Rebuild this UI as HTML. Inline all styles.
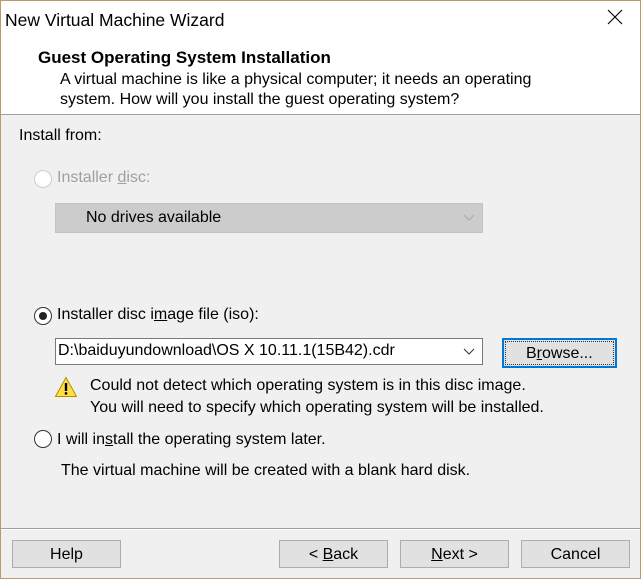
<!DOCTYPE html>
<html><head><style>
body{margin:0;width:641px;height:579px;overflow:hidden;font-family:"Liberation Sans",sans-serif;font-size:16px;color:#000;}
.win{position:absolute;left:0;top:0;width:639px;height:577px;border:1px solid #c0976a;background:#f0f0f0;}
.a{position:absolute;white-space:nowrap;}
.hdr{position:absolute;left:0;top:0;width:639px;height:113px;background:#fff;border-bottom:1px solid #a0a0a0;}
.radio{position:absolute;width:18px;height:18px;border-radius:50%;border:1px solid #333;background:#fff;box-sizing:border-box;}
.btn{position:absolute;top:539px;height:28px;width:109px;background:#e1e1e1;border:1px solid #adadad;box-sizing:border-box;text-align:center;line-height:28px;font-size:16px;}
u{text-decoration:underline;}
</style></head><body><div class="win">
<div class="hdr"></div>
<div class="a" style="left:4px;top:9px;font-size:17.5px;">New Virtual Machine Wizard</div>
<svg class="a" style="left:606px;top:8px" width="16" height="16"><path d="M1 1L15 15M15 1L1 15" stroke="#000" stroke-width="1.1"/></svg>
<div class="a" style="left:37px;top:47px;font-weight:bold;font-size:17px;">Guest Operating System Installation</div>
<div class="a" style="left:59px;top:70px;">A virtual machine is like a physical computer; it needs an operating</div>
<div class="a" style="left:59px;top:90px;">system. How will you install the guest operating system?</div>

<div class="a" style="left:18px;top:126px;">Install from:</div>
<div class="radio" style="left:33px;top:169px;border-color:#ccc;"></div>
<div class="a" style="left:56px;top:168px;color:#a0a0a0;">Installer <u>d</u>isc:</div>
<div class="a" style="left:54px;top:202px;width:428px;height:30px;background:#cccccc;border:1px solid #c4c4c4;box-sizing:border-box;"></div>
<div class="a" style="left:85px;top:208px;">No drives available</div>
<svg class="a" style="left:462px;top:213px" width="12" height="8"><path d="M1 1L6 6L11 1" stroke="#aaa" fill="none"/></svg>

<div class="radio" style="left:33px;top:306px;"><div style="position:absolute;left:4px;top:4px;width:8px;height:8px;border-radius:50%;background:#222"></div></div>
<div class="a" style="left:56px;top:305px;">Installer disc i<u>m</u>age file (iso):</div>
<div class="a" style="left:54px;top:337px;width:428px;height:27px;background:#fff;border:1px solid #7a7a7a;box-sizing:border-box;"></div>
<div class="a" style="left:57px;top:341px;">D:\baiduyundownload\OS X 10.11.1(15B42).cdr</div>
<svg class="a" style="left:462px;top:347px" width="12" height="8"><path d="M1 1L6 6L11 1" stroke="#333" fill="none"/></svg>
<div class="a" style="left:501px;top:337px;width:115px;height:30px;background:#e1e1e1;border:2px solid #0078d7;box-sizing:border-box;"><div style="position:absolute;left:1px;top:1px;right:1px;bottom:1px;border:1px dotted #333;"></div></div>
<div class="a" style="left:525px;top:344px;">B<u>r</u>owse...</div>
<svg class="a" style="left:53px;top:375px" width="24" height="22"><path d="M12 1.5L22.5 20.5H1.5Z" fill="#ffe042" stroke="#b38f00" stroke-width="1"/><rect x="10.8" y="7" width="2.4" height="8" fill="#000"/><rect x="10.8" y="16.2" width="2.4" height="2.4" fill="#000"/></svg>
<div class="a" style="left:89px;top:376px;">Could not detect which operating system is in this disc image.</div>
<div class="a" style="left:89px;top:398px;">You will need to specify which operating system will be installed.</div>

<div class="radio" style="left:33px;top:429px;"></div>
<div class="a" style="left:56px;top:430px;">I will in<u>s</u>tall the operating system later.</div>
<div class="a" style="left:60px;top:461px;">The virtual machine will be created with a blank hard disk.</div>

<div class="a" style="left:0;top:527px;width:639px;height:1px;background:#a0a0a0;"></div>
<div class="a" style="left:0;top:528px;width:639px;height:1px;background:#fff;"></div>
<div class="btn" style="left:11px;">Help</div>
<div class="btn" style="left:278px;">&lt; <u>B</u>ack</div>
<div class="btn" style="left:399px;"><u>N</u>ext &gt;</div>
<div class="btn" style="left:520px;">Cancel</div>
</div></body></html>
